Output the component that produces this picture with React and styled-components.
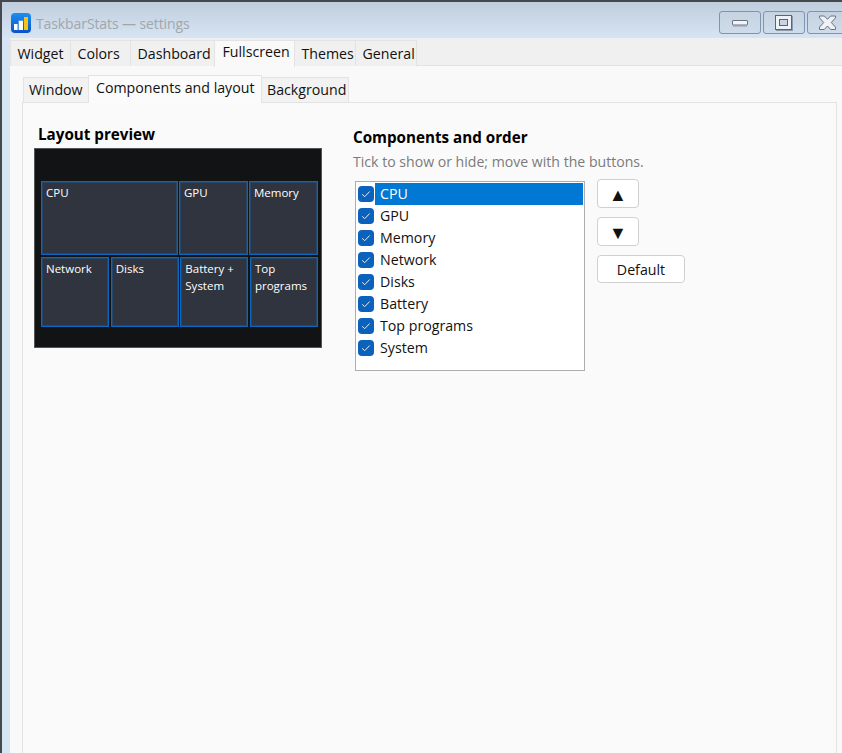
import styled, { createGlobalStyle } from 'styled-components';

const Global = createGlobalStyle`
  html, body {
    margin: 0;
    padding: 0;
    overflow: hidden;
    background: #d6e4f3;
  }
  * {
    box-sizing: border-box;
  }
`;

const Screen = styled.div`
  width: 842px;
  height: 753px;
  overflow: hidden;
  display: flex;
  flex-direction: column;
  border-top: 2px solid #45484c;
  border-left: 2px solid #45484c;
  background: linear-gradient(#bfcddc 0, #d6e4f3 36px);
  font-family: 'Open Sans', 'Noto Sans', sans-serif;
  font-size: 14.2px;
  color: #111;
`;

const TitleBar = styled.div`
  height: 36px;
  flex: none;
  display: flex;
  align-items: flex-start;
  padding: 10px 0 0 9px;
`;

const IconSlot = styled.span`
  display: flex;
  margin-top: 1px;
`;

const Title = styled.span`
  margin: 2px 0 0 5px;
  font-size: 14px;
  letter-spacing: -0.1px;
  color: #a2a6ab;
`;

const WindowButtons = styled.div`
  margin: -1px -7px 0 auto;
  display: flex;
  gap: 2px;
`;

const WindowButton = styled.div`
  width: 42px;
  height: 23px;
  display: flex;
  align-items: center;
  justify-content: center;
  border: 1px solid #7f94b1;
  border-radius: 3px;
  background: linear-gradient(#c5d2e1, #cfdcea);
`;

const Client = styled.div`
  flex: 1;
  min-height: 0;
  margin-left: 8px;
  display: flex;
  flex-direction: column;
  background: #f9f9f9;
`;

const TabStrip = styled.div`
  height: 28px;
  flex: none;
  display: flex;
  align-items: flex-end;
  padding-left: 1px;
  background: linear-gradient(#f0f0f0 0, #f0f0f0 27px, #e3e3e3 27px);
`;

const Tab = styled.div`
  width: ${({ $width }) => $width}px;
  height: ${({ $active }) => ($active ? 27 : 26)}px;
  padding: ${({ $active }) => ($active ? '1px 0 0 7.5px' : '3px 0 0 6.5px')};
  border: 1px solid #e3e3e3;
  border-bottom: none;
  margin-left: -1px;
  background: ${({ $active }) => ($active ? '#f9f9f9' : '#f0f0f0')};
  white-space: nowrap;
  position: relative;
  z-index: ${({ $active }) => ($active ? 1 : 0)};
  margin-bottom: ${({ $active }) => ($active ? '-1px' : '0')};
`;

const Body = styled.div`
  flex: 1;
  min-height: 0;
  display: flex;
  flex-direction: column;
  padding: 9px 5px 0 12px;
`;

const SubTabStrip = styled.div`
  height: 27px;
  flex: none;
  display: flex;
  align-items: flex-end;
  padding-left: 2px;
`;

const SubTab = styled(Tab)`
  background: ${({ $active }) => ($active ? '#fbfbfb' : '#f2f2f2')};
  height: ${({ $active }) => ($active ? 28 : 25)}px;
  padding: ${({ $active }) => ($active ? '2px 0 0 7px' : '2px 0 0 5px')};
`;

const Panel = styled.div`
  flex: 1;
  min-height: 0;
  display: flex;
  align-items: flex-start;
  padding: 25px 0 0 11px;
  border: 1px solid #e3e3e3;
  border-bottom: none;
  background: #fafafa;
`;

const PreviewColumn = styled.section`
  width: 288px;
  flex: none;
  margin-top: -4px;
`;

const Heading = styled.h2`
  margin: 0;
  padding-left: ${({ $indent }) => $indent}px;
  font-size: 15.2px;
  line-height: 20px;
  font-weight: 700;
  color: #000;
`;

const Preview = styled.div`
  height: 200px;
  margin-top: 4px;
  padding: 32px 3px 0 6px;
  display: flex;
  flex-direction: column;
  gap: 2px;
  border: 1px solid #555;
  background: #121315;
`;

const TileRow = styled.div`
  display: flex;
  justify-content: space-between;
  height: ${({ $height }) => $height}px;
`;

const Tile = styled.div`
  width: ${({ $width }) => $width}px;
  padding: 2px 4px;
  border: 1px solid #0b66bd;
  box-shadow: inset 0 0 0 1px rgba(12, 111, 206, 0.35);
  background: #30343e;
  color: #fff;
  font-size: 11.5px;
  line-height: 17px;
`;

const OrderColumn = styled.section`
  margin: -1px 0 0 31px;
`;

const Hint = styled.p`
  margin: 5px 0 0;
  font-size: 14.1px;
  line-height: 20px;
  color: #7a7a7a;
`;

const OrderRow = styled.div`
  margin: 9px 0 0 2px;
  display: flex;
  align-items: flex-start;
  gap: 12px;
`;

const List = styled.div`
  width: 230px;
  height: 190px;
  padding: 1px 1px 0 2px;
  border: 1px solid #adadad;
  background: #fff;
`;

const Item = styled.div`
  height: 22px;
  display: flex;
  align-items: center;
  gap: 1px;
`;

const Check = styled.span`
  width: 16px;
  height: 16px;
  flex: none;
  display: flex;
  align-items: center;
  justify-content: center;
  border-radius: 4px;
  background: #0a62bd;
`;

const ItemLabel = styled.span`
  flex: 1;
  height: 22px;
  padding-left: 5px;
  line-height: 21px;
  background: ${({ $selected }) => ($selected ? '#0078d4' : 'transparent')};
  color: ${({ $selected }) => ($selected ? '#fff' : '#111')};
`;

const Buttons = styled.div`
  margin-top: -2px;
  display: flex;
  flex-direction: column;
  align-items: flex-start;
  gap: 9px;
`;

const Button = styled.button`
  width: ${({ $width }) => $width}px;
  height: ${({ $height }) => $height}px;
  padding: 0;
  display: flex;
  align-items: center;
  justify-content: center;
  border: 1px solid #d0d0d0;
  border-radius: 4px;
  background: #fff;
  color: #111;
  font: inherit;
  font-size: ${({ $arrow }) => ($arrow ? '18px' : 'inherit')};
`;

const AppIcon = () => (
  <svg width="20" height="20" viewBox="0 0 20 20">
    <defs>
      <linearGradient id="appIconFill" x1="0" y1="0" x2="0" y2="1">
        <stop offset="0" stopColor="#1b8ff2" />
        <stop offset="1" stopColor="#0a52c6" />
      </linearGradient>
    </defs>
    <rect width="20" height="20" rx="4" fill="url(#appIconFill)" />
    <rect x="3" y="11" width="3.6" height="6" fill="#fff" />
    <rect x="7.700" y="7.700" width="4.300" height="9.300" fill="#fff" />
    <rect x="13" y="4" width="4" height="13" fill="#f6c415" />
  </svg>
);

const MinimizeIcon = () => (
  <svg width="18" height="8" viewBox="0 0 18 8">
    <rect x="1.500" y="1.500" width="15" height="4.500" rx="0.500" fill="#f2f4f7" stroke="#6a7280" />
    <path d="M2 7h14" stroke="#8d9bb0" />
  </svg>
);

const MaximizeIcon = () => (
  <svg width="18" height="16" viewBox="0 0 18 16">
    <rect x="0.500" y="0.500" width="16" height="14" fill="#eef1f5" stroke="#5c6470" />
    <rect x="4.500" y="4.500" width="8" height="6" fill="#c7d4e3" stroke="#5c6470" />
    <path d="M1 15.500h17M17.500 1v15" stroke="#8d9bb0" />
  </svg>
);

const CloseIcon = () => (
  <svg width="20" height="16" viewBox="0 0 20 16">
    <path
      d="M1.500 1h4.800L9.500 4.300 12.700 1h4.800v1.800L13.300 7.500l4.200 4.700V14.500h-4.800L9.500 11 6.300 14.500H1.500v-2.300l4.200-4.700L1.500 2.800z"
      fill="#eef1f5"
      stroke="#6a7280"
    />
  </svg>
);

const CheckMark = () => (
  <svg width="10" height="10" viewBox="0 0 10 10">
    <path d="M1.200 5.300l2.500 2.400 5-5.200" fill="none" stroke="#e6f0fb" strokeWidth="1" />
  </svg>
);

const mainTabs = [
  ['Widget', 61],
  ['Colors', 61],
  ['Dashboard', 85],
  ['Fullscreen', 81],
  ['Themes', 62],
  ['General', 62],
];
const subTabs = [
  ['Window', 66],
  ['Components and layout', 174],
  ['Background', 88],
];
const components = ['CPU', 'GPU', 'Memory', 'Network', 'Disks', 'Battery', 'Top programs', 'System'];

const App = () => (
  <>
    <Global />
    <Screen>
      <TitleBar>
        <IconSlot><AppIcon /></IconSlot>
        <Title>TaskbarStats — settings</Title>
        <WindowButtons>
          <WindowButton><MinimizeIcon /></WindowButton>
          <WindowButton><MaximizeIcon /></WindowButton>
          <WindowButton><CloseIcon /></WindowButton>
        </WindowButtons>
      </TitleBar>
      <Client>
        <TabStrip>
          {mainTabs.map(([label, width]) => (
            <Tab key={label} $width={width} $active={label === 'Fullscreen'}>{label}</Tab>
          ))}
        </TabStrip>
        <Body>
          <SubTabStrip>
            {subTabs.map(([label, width]) => (
              <SubTab key={label} $width={width} $active={label === 'Components and layout'}>{label}</SubTab>
            ))}
          </SubTabStrip>
          <Panel>
            <PreviewColumn>
              <Heading $indent={4}>Layout preview</Heading>
              <Preview>
                <TileRow $height={74}>
                  <Tile $width={137}>CPU</Tile>
                  <Tile $width={69}>GPU</Tile>
                  <Tile $width={69}>Memory</Tile>
                </TileRow>
                <TileRow $height={70}>
                  <Tile $width={68}>Network</Tile>
                  <Tile $width={68}>Disks</Tile>
                  <Tile $width={68}>Battery + System</Tile>
                  <Tile $width={68}>Top programs</Tile>
                </TileRow>
              </Preview>
            </PreviewColumn>
            <OrderColumn>
              <Heading>Components and order</Heading>
              <Hint>Tick to show or hide; move with the buttons.</Hint>
              <OrderRow>
                <List>
                  {components.map((name, index) => (
                    <Item key={name}>
                      <Check><CheckMark /></Check>
                      <ItemLabel $selected={index === 0}>{name}</ItemLabel>
                    </Item>
                  ))}
                </List>
                <Buttons>
                  <Button $arrow $width={42} $height={29}>▲</Button>
                  <Button $arrow $width={42} $height={29}>▼</Button>
                  <Button $width={88} $height={28}>Default</Button>
                </Buttons>
              </OrderRow>
            </OrderColumn>
          </Panel>
        </Body>
      </Client>
    </Screen>
  </>
);

export default App;
